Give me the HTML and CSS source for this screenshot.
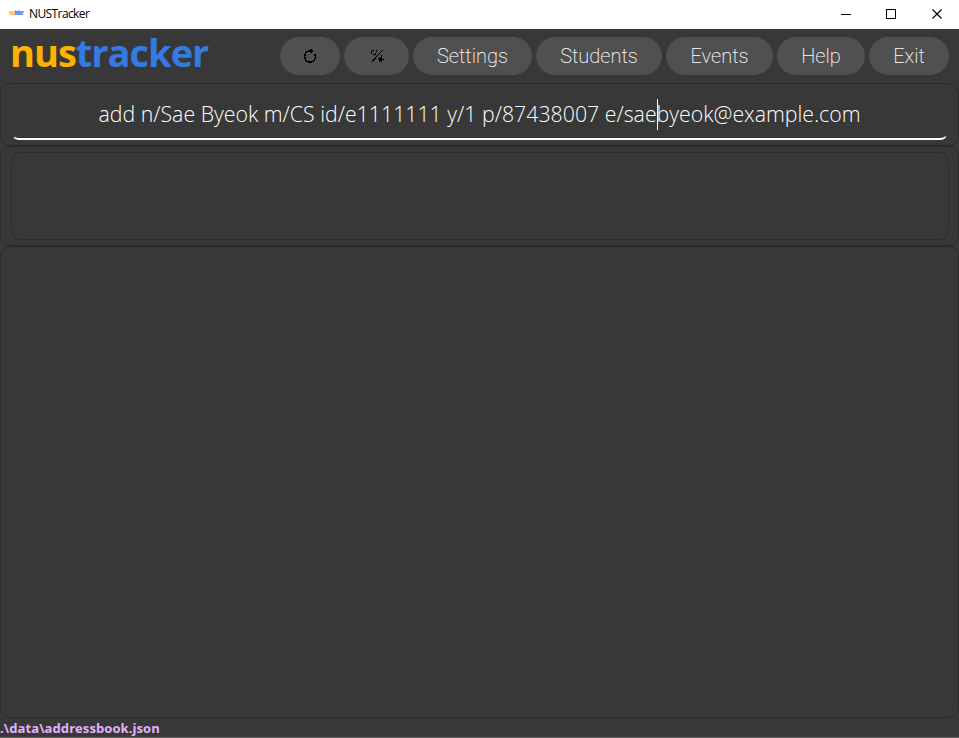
FILE: index.html
```html
<!DOCTYPE html>
<html lang="en">
<head>
<meta charset="utf-8">
<title>NUSTracker</title>
<link rel="stylesheet" href="styles.css">
</head>
<body>
<div class="titlebar">
  <span class="app-icon"><b>nus</b>tracker</span>
  <span class="title">NUSTracker</span>
  <svg class="controls" width="136" height="28" viewBox="0 0 136 28" fill="none" stroke="#000" shape-rendering="crispEdges">
    <path d="M18 13.500h10"/>
    <rect x="63.500" y="8.500" width="9" height="9"/>
    <path d="M109.500 8.500l9 9M118.500 8.500l-9 9" shape-rendering="auto" stroke-width="1.200"/>
  </svg>
</div>
<header class="header">
  <div class="logo"><span class="nus">nus</span><span class="tracker">tracker</span></div>
  <nav class="nav">
    <button class="pill refresh" aria-label="Refresh">
      <svg width="20" height="20" viewBox="0 0 20 20" fill="none" stroke="#000" stroke-width="1.500" shape-rendering="crispEdges"><path d="M11 5H8.500C6 5.600 4.700 7.800 4.700 10.600c0 3.200 2.300 5.600 5.300 5.600s5.400-2.400 5.400-5.400c0-1.100-.3-2.200-.9-3"/><path d="M10 2.500L14 5 10 7.500z" fill="#000" stroke="none"/></svg>
    </button>
    <button class="pill theme" aria-label="Theme">
      <svg width="20" height="20" viewBox="0 0 20 20" fill="none" stroke="#000" stroke-width="1" shape-rendering="crispEdges"><path d="M5 15.500L15.500 4.500"/><path d="M6.500 4.500H6C4.500 5 4.200 6.500 5 8M6 8.500h2l1-1.500M9 4l1 1.500"/><path d="M14.500 8.500l-1 2.500-4 2h3l-.8 3 2-1 1.500 1.500v-3h1.500v-1h-1.500z" fill="#000" stroke="none"/></svg>
    </button>
    <button class="pill settings">Settings</button>
    <button class="pill students">Students</button>
    <button class="pill events">Events</button>
    <button class="pill help">Help</button>
    <button class="pill exit">Exit</button>
  </nav>
</header>
<main class="main">
  <section class="panel command">
    <div class="field"><span class="entry">add n/Sae Byeok m/CS id/e1111111 y/1 p/87438007 e/sae<i class="caret"></i>byeok@example.com</span></div>
  </section>
  <section class="panel result"><div class="result-box"></div></section>
  <section class="panel list"></section>
</main>
<footer class="status">.\data\addressbook.json</footer>
</body>
</html>
```

FILE: styles.css
```css
* { box-sizing: border-box; }
body {
  margin: 0;
  width: 959px;
  height: 738px;
  overflow: hidden;
  display: flex;
  flex-direction: column;
  background: #383838;
  font-family: "Open Sans", "Noto Sans", sans-serif;
}
.titlebar {
  height: 29px;
  flex: none;
  display: flex;
  align-items: center;
  background: #fff;
  color: #000;
}
.app-icon {
  width: 20px;
  padding: 0 0 3px 9px;
  font: bold 7px/8px "Open Sans", sans-serif;
  letter-spacing: -2.600px;
  color: #5c96ea;
}
.app-icon b { color: #ffc54a; }
.title {
  margin-left: 9px;
  padding-bottom: 3px;
  font-size: 12px;
  letter-spacing: -0.600px;
}
.controls { margin-left: auto; }
.header {
  height: 54px;
  flex: none;
  display: flex;
  justify-content: space-between;
  padding: 8px 10px 0 10px;
}
.logo {
  font-size: 38px;
  line-height: 31px;
  font-weight: 700;
  letter-spacing: -1px;
  white-space: nowrap;
}
.nus { color: #ffb300; }
.tracker { color: #357ae1; }
.nav { display: flex; gap: 4px; }
.pill {
  height: 38px;
  padding: 0;
  border: 0;
  border-radius: 19px;
  background: #505050;
  color: #fff;
  font: 200 20px/38px Roboto, sans-serif;
  display: flex;
  justify-content: center;
  align-items: center;
}
.refresh { width: 60px; }
.theme { width: 65px; }
.settings { width: 119px; }
.students { width: 126px; }
.events { width: 107px; }
.help { width: 88px; }
.exit { width: 80px; }
.main { flex: 1; display: flex; flex-direction: column; }
.panel { border: 1px solid #2b2b2b; border-radius: 10px; }
.command { height: 63px; padding: 8px 10px 0; }
.field {
  height: 48px;
  border-bottom: 2px solid #fff;
  border-radius: 8px;
  clip-path: inset(0 2px 0 3px);
  text-align: center;
  font-weight: 300;
  font-size: 21.300px;
  line-height: 44px;
  color: #fff;
  white-space: nowrap;
}
.caret {
  display: inline-block;
  width: 1px;
  height: 31px;
  margin-right: -1px;
  vertical-align: -8px;
  background: #fff;
}
.result { height: 100px; padding: 5px 9px 5px 10px; }
.result-box { height: 88px; border: 1px solid #2b2b2b; border-radius: 10px; }
.list { flex: 1; }
.status {
  height: 20px;
  flex: none;
  border-bottom: 1px solid #686868;
  color: #e6b0ff;
  font-size: 13px;
  font-weight: 700;
  letter-spacing: 0.080px;
  line-height: 20px;
}
```
